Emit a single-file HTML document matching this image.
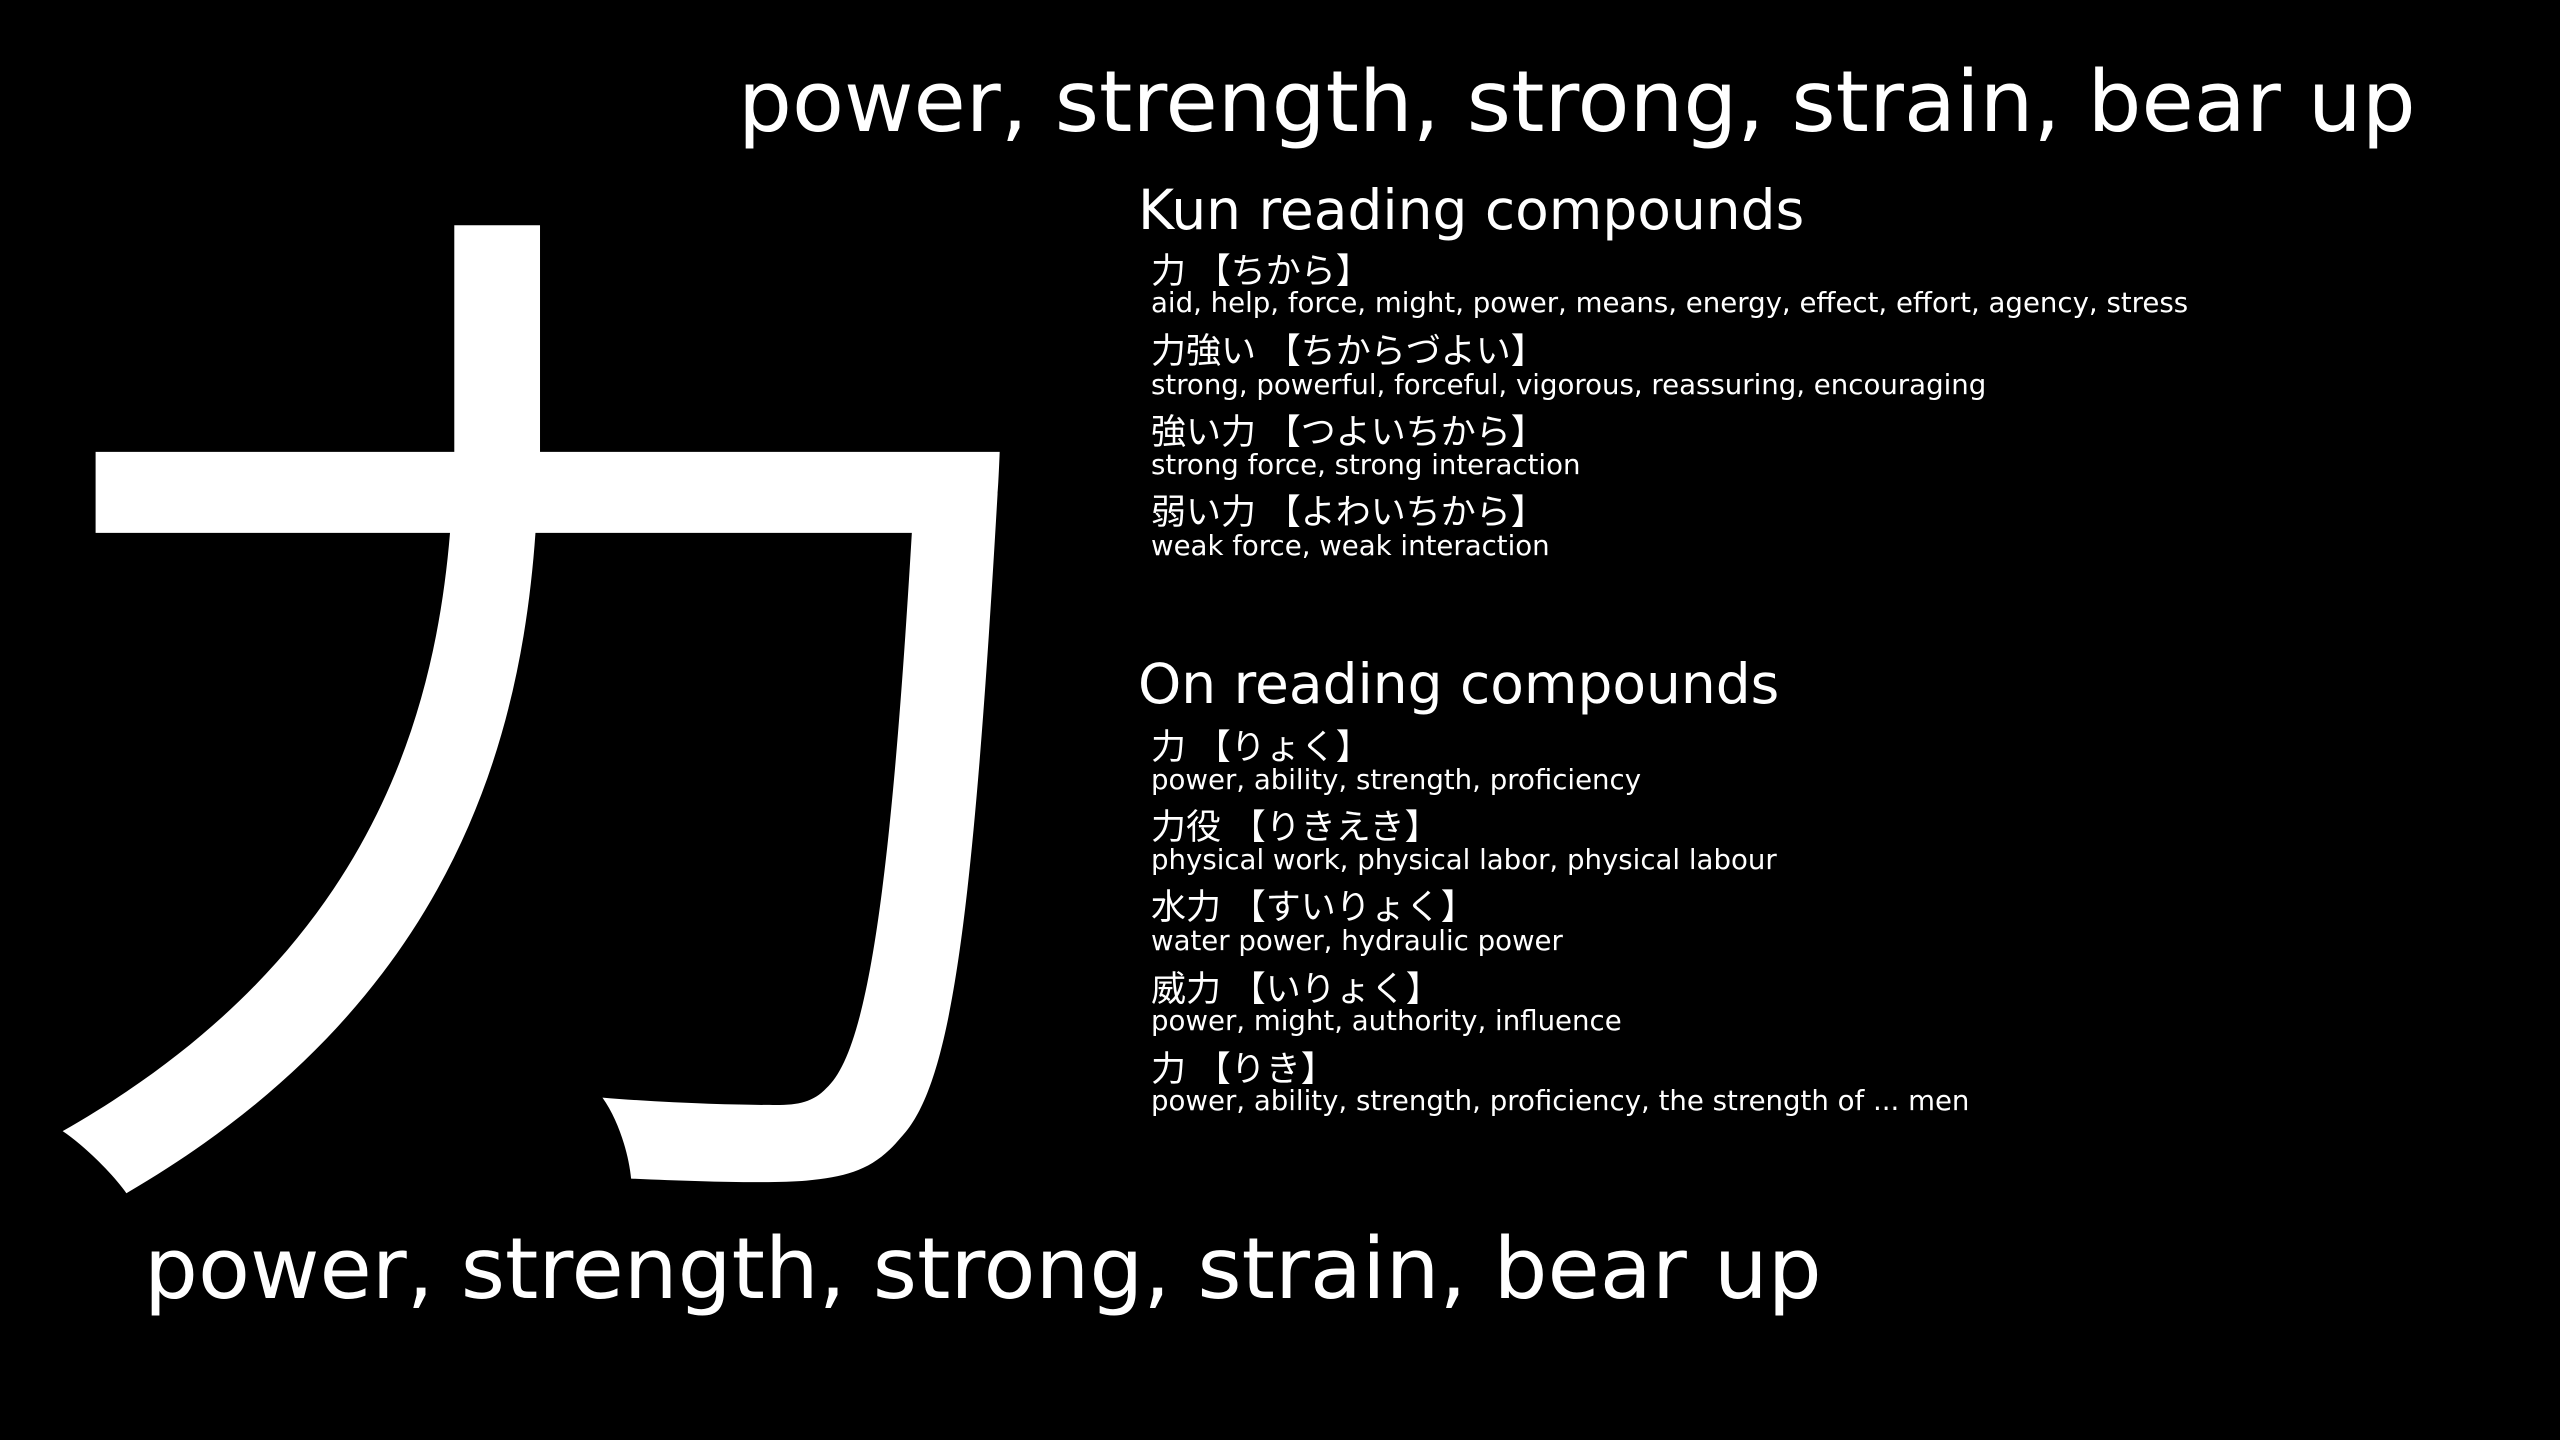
<!DOCTYPE html>
<html><head><meta charset="utf-8"><style>
html,body{margin:0;padding:0;background:#000;width:2560px;height:1440px;overflow:hidden}
svg{display:block}
.t{font-family:"DejaVu Sans","Noto Sans CJK JP",sans-serif;fill:#fff}
.j{font-family:"Liberation Sans","Noto Sans CJK JP",sans-serif;fill:#fff;font-size:35px}
.d{font-family:"DejaVu Sans",sans-serif;fill:#fff;font-size:27.6px}
</style></head><body>
<svg width="2560" height="1440" viewBox="0 0 2560 1440" xmlns="http://www.w3.org/2000/svg">
<rect width="2560" height="1440" fill="#000"/>
<g transform="translate(62,0) scale(1.045,1) translate(-62,0)">
<text x="532" y="1105" text-anchor="middle" style="font-family:'Noto Sans CJK JP',sans-serif;fill:#fff;font-size:1050px">力</text>
</g>
<text class="t" x="738" y="131" font-size="85">power, strength, strong, strain, bear up</text>
<text class="t" x="144" y="1298" font-size="85">power, strength, strong, strain, bear up</text>
<text class="t" x="1138" y="229" font-size="55">Kun reading compounds</text>
<text class="j" x="1151" y="283">力 【ちから】</text>
<text class="d" x="1151" y="312">aid, help, force, might, power, means, energy, effect, effort, agency, stress</text>
<text class="j" x="1151" y="363">力強い 【ちからづよい】</text>
<text class="d" x="1151" y="394">strong, powerful, forceful, vigorous, reassuring, encouraging</text>
<text class="j" x="1151" y="444">強い力 【つよいちから】</text>
<text class="d" x="1151" y="474">strong force, strong interaction</text>
<text class="j" x="1151" y="524">弱い力 【よわいちから】</text>
<text class="d" x="1151" y="555">weak force, weak interaction</text>
<text class="t" x="1138" y="703" font-size="55">On reading compounds</text>
<text class="j" x="1151" y="759">力 【りょく】</text>
<text class="d" x="1151" y="789">power, ability, strength, proficiency</text>
<text class="j" x="1151" y="839">力役 【りきえき】</text>
<text class="d" x="1151" y="869">physical work, physical labor, physical labour</text>
<text class="j" x="1151" y="919">水力 【すいりょく】</text>
<text class="d" x="1151" y="950">water power, hydraulic power</text>
<text class="j" x="1151" y="1001">威力 【いりょく】</text>
<text class="d" x="1151" y="1030">power, might, authority, influence</text>
<text class="j" x="1151" y="1081">力 【りき】</text>
<text class="d" x="1151" y="1110">power, ability, strength, proficiency, the strength of ... men</text>
</svg>
</body></html>
